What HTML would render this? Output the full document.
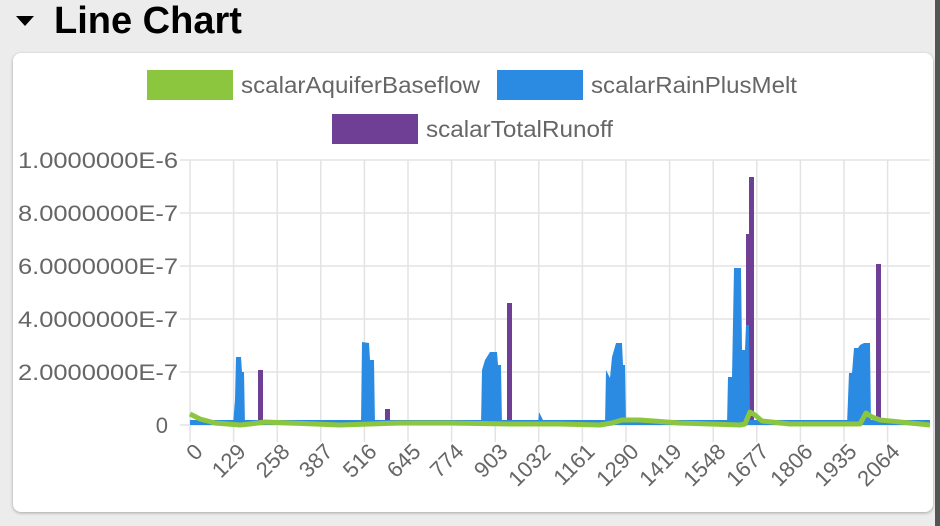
<!DOCTYPE html>
<html><head><style>
body{margin:0;width:940px;height:526px;background:#ececec;font-family:"Liberation Sans",sans-serif;overflow:hidden;position:relative}
.h{position:absolute;left:54px;top:0px;font-size:38px;font-weight:bold;color:#000}
.tri{position:absolute;left:16px;top:16px;width:0;height:0;border-left:9px solid transparent;border-right:9px solid transparent;border-top:10px solid #000}
.card{position:absolute;left:13px;top:53px;width:920px;height:459px;background:#fff;border-radius:8px;box-shadow:0 1px 3px rgba(0,0,0,.3)}
.bar{position:absolute;left:935px;top:0;width:5px;height:526px;background:#555}
</style></head><body>
<div class="tri"></div><div class="h">Line Chart</div>
<div class="bar"></div>
<div class="card"></div>
<svg width="940" height="526" style="position:absolute;left:0;top:0" font-family="Liberation Sans, sans-serif">
<rect x="147" y="70" width="86" height="30" fill="#8cc63f"/>
<text x="241" y="93" font-size="23" fill="#666" textLength="239" lengthAdjust="spacingAndGlyphs">scalarAquiferBaseflow</text>
<rect x="497" y="70" width="86" height="30" fill="#2b8be3"/>
<text x="591" y="93" font-size="23" fill="#666" textLength="206" lengthAdjust="spacingAndGlyphs">scalarRainPlusMelt</text>
<rect x="332" y="114" width="86" height="30" fill="#6f3f96"/>
<text x="426" y="137" font-size="23" fill="#666" textLength="187" lengthAdjust="spacingAndGlyphs">scalarTotalRunoff</text>
<g stroke="#e3e3e3" stroke-width="1.5">
<line x1="180" y1="160" x2="930" y2="160"/><line x1="180" y1="213" x2="930" y2="213"/>
<line x1="180" y1="266" x2="930" y2="266"/><line x1="180" y1="319" x2="930" y2="319"/>
<line x1="180" y1="372" x2="930" y2="372"/><line x1="180" y1="425" x2="930" y2="425"/>
<line x1="190" y1="160" x2="190" y2="442"/><line x1="233.6" y1="160" x2="233.6" y2="442"/>
<line x1="277.2" y1="160" x2="277.2" y2="442"/><line x1="320.8" y1="160" x2="320.8" y2="442"/>
<line x1="364.4" y1="160" x2="364.4" y2="442"/><line x1="408" y1="160" x2="408" y2="442"/>
<line x1="451.6" y1="160" x2="451.6" y2="442"/><line x1="495.2" y1="160" x2="495.2" y2="442"/>
<line x1="538.8" y1="160" x2="538.8" y2="442"/><line x1="582.4" y1="160" x2="582.4" y2="442"/>
<line x1="626" y1="160" x2="626" y2="442"/><line x1="669.6" y1="160" x2="669.6" y2="442"/>
<line x1="713.2" y1="160" x2="713.2" y2="442"/><line x1="756.8" y1="160" x2="756.8" y2="442"/>
<line x1="800.4" y1="160" x2="800.4" y2="442"/><line x1="844" y1="160" x2="844" y2="442"/>
<line x1="887.6" y1="160" x2="887.6" y2="442"/>
</g>
<g font-size="22" fill="#666" text-anchor="end">
<text x="178" y="168" textLength="160" lengthAdjust="spacingAndGlyphs">1.0000000E-6</text>
<text x="178" y="221" textLength="160" lengthAdjust="spacingAndGlyphs">8.0000000E-7</text>
<text x="178" y="274" textLength="160" lengthAdjust="spacingAndGlyphs">6.0000000E-7</text>
<text x="178" y="327" textLength="160" lengthAdjust="spacingAndGlyphs">4.0000000E-7</text>
<text x="178" y="380" textLength="160" lengthAdjust="spacingAndGlyphs">2.0000000E-7</text>
<text x="168" y="433">0</text>
</g>
<g font-size="22" fill="#666" text-anchor="end">
<text transform="translate(204,453) rotate(-45)">0</text>
<text transform="translate(247,453) rotate(-45)">129</text>
<text transform="translate(291,453) rotate(-45)">258</text>
<text transform="translate(334,453) rotate(-45)">387</text>
<text transform="translate(378,453) rotate(-45)">516</text>
<text transform="translate(422,453) rotate(-45)">645</text>
<text transform="translate(465,453) rotate(-45)">774</text>
<text transform="translate(509,453) rotate(-45)">903</text>
<text transform="translate(552,453) rotate(-45)">1032</text>
<text transform="translate(596,453) rotate(-45)">1161</text>
<text transform="translate(640,453) rotate(-45)">1290</text>
<text transform="translate(683,453) rotate(-45)">1419</text>
<text transform="translate(727,453) rotate(-45)">1548</text>
<text transform="translate(770,453) rotate(-45)">1677</text>
<text transform="translate(814,453) rotate(-45)">1806</text>
<text transform="translate(858,453) rotate(-45)">1935</text>
<text transform="translate(901,453) rotate(-45)">2064</text>
</g>
<g fill="#6f3f96">
<rect x="258" y="370" width="5" height="55"/><rect x="385" y="409" width="5" height="16"/>
<rect x="507" y="303" width="5" height="122"/><rect x="746" y="234" width="3" height="191"/>
<rect x="749" y="177" width="5" height="248"/><rect x="738" y="405" width="3" height="20"/>
<rect x="876" y="264" width="5" height="161"/><rect x="862" y="412" width="3" height="13"/>
</g>
<g fill="#2b8be3">
<polygon points="233,425 235,400 236,357 241,357 242,372 244,372 245,425"/>
<polygon points="361,425 362,342 369,343 370,360 374,360 375,425"/>
<polygon points="481,425 482,370 485,360 490,352 497,352 498,365 501,365 502,425"/>
<polygon points="538,425 539,412 543,420 545,425"/>
<polygon points="605,425 606,370 610,378 612,357 616,343 622,343 623,365 625,365 626,425"/>
<polygon points="727,425 728,377 732,377 734,268 741,268 742,350 745,350 746,325 749,325 750,425"/>
<polygon points="847,425 849,373 852,373 854,348 858,348 860,345 864,343 870,343 871,425"/>
<rect x="190" y="420" width="740" height="5"/>
</g>
<polyline fill="none" stroke="#8cc63f" stroke-width="5" stroke-linejoin="round" points="190,414 200,419 215,423 240,425 250,424 265,422 290,423 340,425 400,423 450,423 510,424 560,424 600,425 612,423 622,420 640,420 680,423 740,425 745,424 750,412 755,415 762,421 790,424 860,424 866,413 872,417 880,420 930,425"/>
</svg>
</body></html>
